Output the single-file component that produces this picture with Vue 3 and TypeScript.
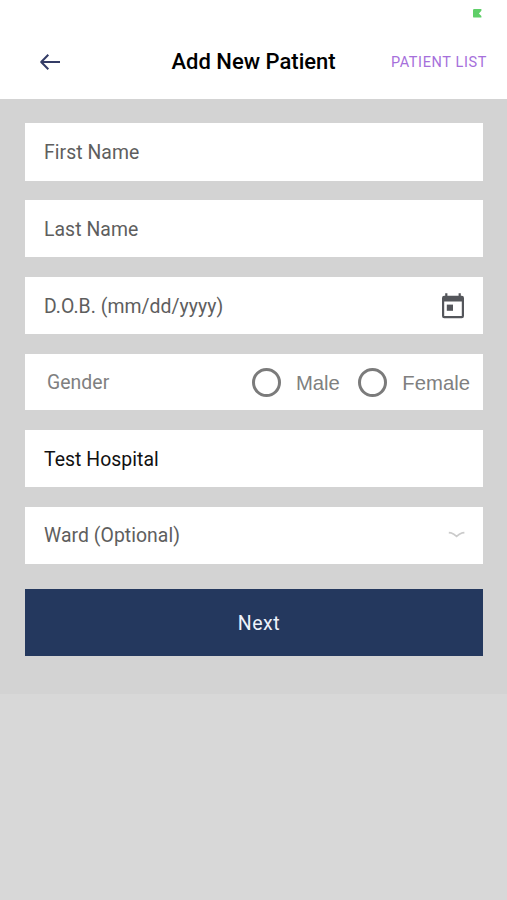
<script setup lang="ts">
import { ref } from 'vue'

interface Field {
  id: string
  text: string
  kind: 'text' | 'date' | 'gender' | 'select'
  filled?: boolean
}

const fields: Field[] = [
  { id: 'first', text: 'First Name', kind: 'text' },
  { id: 'last', text: 'Last Name', kind: 'text' },
  { id: 'dob', text: 'D.O.B. (mm/dd/yyyy)', kind: 'date' },
  { id: 'gender', text: 'Gender', kind: 'gender' },
  { id: 'hospital', text: 'Test Hospital', kind: 'text', filled: true },
  { id: 'ward', text: 'Ward (Optional)', kind: 'select' },
]

const genders = ['Male', 'Female']
const gender = ref<string | null>(null)
</script>

<template>
  <div class="screen">
    <div class="status">
      <svg class="battery" width="9" height="9" viewBox="0 0 9 9">
        <path d="M1.2 0H8.4V1.8L5.9 4.4L8.4 7V8.6H1.2Q0 8.6 0 7.4V1.2Q0 0 1.2 0Z" fill="#5fcf68" />
      </svg>
    </div>
    <header class="bar">
      <button class="back" type="button" aria-label="Back">
        <svg width="22" height="18" viewBox="0 0 22 18" fill="none" stroke="#343c66" stroke-width="2">
          <path d="M9.3 1.7L2.2 9L9.3 16.3M2.2 9H21" stroke-linejoin="round" />
        </svg>
      </button>
      <h1 class="title">Add New Patient</h1>
      <a class="list">PATIENT LIST</a>
    </header>
    <main class="form">
      <div v-for="f in fields" :key="f.id" class="field" :class="[f.kind, { filled: f.filled }]">
        <span class="text">{{ f.text }}</span>
        <svg v-if="f.kind === 'date'" class="calendar" width="24" height="26" viewBox="0 0 24 26">
          <path
            fill="#54565b"
            fill-rule="evenodd"
            d="M4.2 0.3H6.4V2.8H17.6V0.3H19.8V2.8H20.8Q23 2.8 23 5.1V23Q23 25.3 20.8 25.3H3.2Q1 25.3 1 23V5.1Q1 2.8 3.2 2.8H4.2ZM3.2 8.6V23.1H20.8V8.6Z"
          />
          <rect x="5.8" y="11.6" width="6.2" height="6.2" fill="#54565b" />
        </svg>
        <div v-if="f.kind === 'gender'" class="options">
          <button
            v-for="g in genders"
            :key="g"
            type="button"
            class="option"
            @click="gender = g"
          >
            <span class="ring" :class="{ on: gender === g }"></span>
            <span class="name">{{ g }}</span>
          </button>
        </div>
        <svg v-if="f.kind === 'select'" class="chevron" width="18" height="8" viewBox="0 0 18 8">
          <path d="M0.8 1.6L2.8 1.8Q6 3 8.6 5.3Q11.2 3 14.4 1.8L16.4 1.6" fill="none" stroke="#cbcbcb" stroke-width="1.7" />
        </svg>
      </div>
      <button class="next" type="button">Next</button>
    </main>
  </div>
</template>

<style>
body {
  margin: 0;
  background: #d8d8d8;
}
</style>

<style scoped>
.screen {
  width: 507px;
  height: 900px;
  overflow: hidden;
  background: #d8d8d8;
  font-family: Roboto, 'Liberation Sans', sans-serif;
}
button {
  border: 0;
  padding: 0;
  background: none;
  font: inherit;
  color: inherit;
}
.status {
  box-sizing: border-box;
  height: 26px;
  padding: 9px 25px 0 0;
  display: flex;
  justify-content: flex-end;
  background: #fff;
}
.bar {
  box-sizing: border-box;
  height: 72.5px;
  padding: 0 20px 0 39px;
  display: grid;
  grid-template-columns: 132.5px 1fr auto;
  align-items: center;
  background: #fff;
}
.back svg {
  display: block;
}
.title {
  margin: 0;
  font-size: 22px;
  line-height: 72px;
  font-weight: 500;
  color: #000;
  white-space: nowrap;
}
.list {
  padding-top: 2px;
  font-size: 14.5px;
  line-height: 70px;
  letter-spacing: 0.62px;
  color: #a66fdb;
}
.form {
  box-sizing: border-box;
  height: 595.5px;
  padding: 24.8px 24.5px 0 25px;
  display: flex;
  flex-direction: column;
  gap: 19.6px;
  background: #d3d3d3;
}
.field {
  box-sizing: border-box;
  height: 57.3px;
  flex: none;
  padding: 0 17px 0 19px;
  display: flex;
  align-items: center;
  justify-content: space-between;
  background: #fff;
  font-size: 19.4px;
  color: #5e5e5e;
}
.text {
  padding-top: 1px;
  letter-spacing: 0.05px;
}
.field.date {
  padding-right: 17.5px;
}
.field.date .text {
  padding-top: 2px;
}
.field.filled {
  color: #111;
}
.field.filled .text {
  padding-top: 0;
}
.field.gender {
  height: 56.3px;
  padding: 0 12.5px 0 22px;
  color: #808080;
}
.options {
  display: flex;
  gap: 18.5px;
  padding-top: 1px;
}
.option {
  display: flex;
  align-items: center;
  gap: 15px;
  font-family: 'Liberation Sans', sans-serif;
  font-size: 20.3px;
}
.name {
  padding-top: 1px;
}
.ring {
  box-sizing: border-box;
  width: 29px;
  height: 29px;
  border: 3px solid #7b7b7b;
  border-radius: 50%;
}
.ring.on {
  background: radial-gradient(#7b7b7b 0 6px, transparent 7px);
}
.next {
  height: 67.5px;
  flex: none;
  margin-top: 5px;
  padding: 2px 0 0 10.5px;
  background: #24385e;
  color: #eef3fb;
  font-size: 19.5px;
  letter-spacing: 0.5px;
}
</style>
